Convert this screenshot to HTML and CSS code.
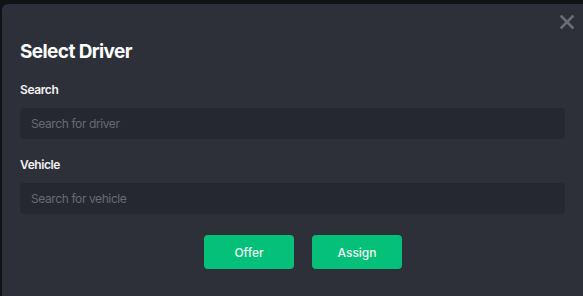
FILE: index.html
```html
<!DOCTYPE html>
<html lang="en">
<head>
    <meta charset="UTF-8">
    <meta name="viewport" content="width=device-width, initial-scale=1.0">
    <title>Select Driver</title>
    <link rel="stylesheet" href="styles.css">
</head>
<body>
    <div class="modal">
        <button class="close" aria-label="Close">
            <svg width="14" height="14" viewBox="0 0 14 14">
                <path d="M1.5 1.5 L12.5 12.5 M12.5 1.5 L1.5 12.5" stroke="#6b6e77" stroke-width="2.6" stroke-linecap="square"/>
            </svg>
        </button>

        <h2>Select Driver</h2>

        <label class="field-label" for="driver">Search</label>
        <input class="field" id="driver" type="text" placeholder="Search for driver">

        <label class="field-label" for="vehicle">Vehicle</label>
        <input class="field" id="vehicle" type="text" placeholder="Search for vehicle">

        <div class="actions">
            <button class="btn">Offer</button>
            <button class="btn">Assign</button>
        </div>
    </div>
</body>
</html>
```

FILE: styles.css
```css
body {
    font-family: Inter, "Noto Sans", sans-serif;
    margin: 0;
    padding: 4px 0 0 2px;
    background-color: #111214;
    overflow: hidden;
}

.modal {
    position: relative;
    width: 566px;
    height: 256px;
    padding: 36px 18px 0 18px;
    background-color: #2d3039;
    border-radius: 6px 6px 0 0;
}

.close {
    position: absolute;
    top: 11px;
    right: 30px;
    padding: 0;
    border: none;
    background: none;
    cursor: pointer;
}

.close svg {
    display: block;
}

h2 {
    margin: 0 0 18px 0;
    font-size: 19px;
    line-height: 24px;
    font-weight: 700;
    letter-spacing: -0.6px;
    color: #fff;
}

.field-label {
    display: block;
    font-size: 12px;
    line-height: 16px;
    font-weight: 600;
    letter-spacing: -0.4px;
    color: #f2f2f3;
    margin-bottom: 10px;
}

.field {
    display: block;
    box-sizing: border-box;
    width: 545px;
    height: 31px;
    margin: 0 0 18px 0;
    padding: 0 11px;
    border: none;
    border-radius: 4px;
    background-color: #252830;
    font-family: inherit;
    font-size: 12px;
    letter-spacing: -0.4px;
    color: #fff;
    outline: none;
}

.field::placeholder {
    color: #686b73;
}

.actions {
    display: flex;
    justify-content: center;
    gap: 18px;
    margin-top: 21px;
}

.btn {
    width: 90px;
    height: 34px;
    border: none;
    border-radius: 4px;
    background-color: #04c078;
    color: #f1f7f3;
    font-family: inherit;
    font-size: 12px;
    font-weight: 500;
    cursor: pointer;
}
```
